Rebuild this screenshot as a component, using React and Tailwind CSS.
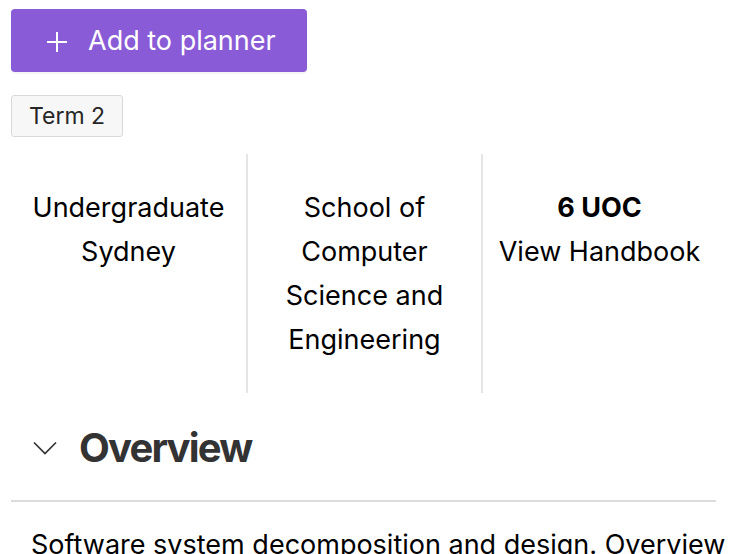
import React from "react";

const PlusIcon = () => (
  <svg width="22" height="22" viewBox="0 0 22 22" fill="none" stroke="currentColor" strokeWidth="2">
    <path d="M11 1v20M1 11h20" />
  </svg>
);

const ChevronDown = () => (
  <svg width="24" height="14" viewBox="0 0 24 14" fill="none" stroke="currentColor" strokeWidth="1.7">
    <path d="M1 1.5l11 11L23 1.5" />
  </svg>
);

const App = () => {
  const details = [
    { lines: ["Undergraduate", "Sydney"] },
    { lines: ["School of", "Computer", "Science and", "Engineering"] },
    { bold: "6 UOC", lines: ["View Handbook"] },
  ];

  return (
    <div
      className="w-[756px] h-[554px] overflow-hidden bg-white text-black"
      style={{ fontFamily: "Inter, 'Liberation Sans', sans-serif" }}
    >
      <div className="pl-[11px] pt-[9px]">
        <button className="flex items-center h-[63px] w-[296px] pl-[35px] pt-[2px] gap-[20px] rounded-[4px] bg-[#8a5bd6] text-white text-[27px] shadow-[0_2px_0_rgba(0,0,0,0.04)]">
          <PlusIcon />
          <span>Add to planner</span>
        </button>

        <div className="mt-[23px] inline-flex items-center h-[42px] px-[17px] rounded-[3px] border border-[#d9d9d9] bg-[#f7f7f7] text-[23px] text-[#262626]">
          Term 2
        </div>

        <div className="mt-[17px] grid grid-cols-3 w-[705px]">
          {details.map((col, i) => (
            <div
              key={i}
              className={
                "h-[239px] pt-[32px] text-center text-[27px] leading-[44px] " +
                (i > 0 ? "border-l-2 border-[#e5e5e5]" : "")
              }
            >
              {col.bold && <div className="font-bold">{col.bold}</div>}
              {col.lines.map((l) => (
                <div key={l}>{l}</div>
              ))}
            </div>
          ))}
        </div>

        <div className="mt-[25px] flex items-center h-[60px] pl-[22px] gap-[22px] text-[#333]">
          <ChevronDown />
          <h2 className="text-[40px] font-bold tracking-[-1.8px]">Overview</h2>
        </div>
        <div className="mt-[22px] w-[705px] h-[2px] bg-[#dcdcdc]" />

        <p className="mt-[23px] pl-[20px] text-[27px] leading-[40px] whitespace-nowrap">
          Software system decomposition and design. Overview
        </p>
      </div>
    </div>
  );
};

export default App;
